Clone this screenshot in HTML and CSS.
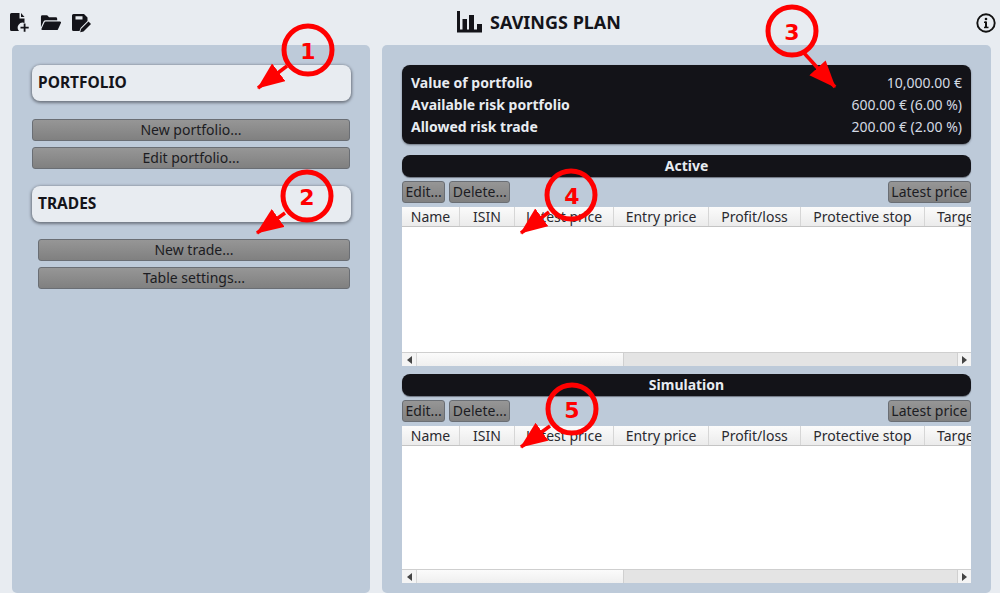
FILE: index.html
```html
<!DOCTYPE html>
<html lang="en">
<head>
  <meta charset="UTF-8" />
  <title>Savings plan</title>
  <link rel="stylesheet" href="styles.css">
</head>
<body>

<header class="topbar">
  <div class="file-icons">
    <svg class="icon" viewBox="0 0 20 20">
      <path d="M2 0h8v5.500h5V10a5 5 0 0 0-5.500 8H2a1.500 1.500 0 0 1-1.500-1.500V1.500A1.500 1.500 0 0 1 2 0z M11.500 0l3.500 4h-3.500z"/>
      <path d="M14.200 10.500h1.800v3.200h3.200v1.800H16v3.200h-1.800v-3.200H11v-1.800h3.200z"/>
    </svg>
    <svg class="icon" viewBox="0 0 22 20">
      <path d="M1 3.500a1.500 1.500 0 0 1 1.500-1.500h5l2 2h7a1.500 1.500 0 0 1 1.500 1.500V7H6a2.500 2.500 0 0 0-2.300 1.500L1 14.500z"/>
      <path d="M6 8.500h15a1 1 0 0 1 .9 1.400l-3 6.600a1.500 1.500 0 0 1-1.400 .9H2.500a1 1 0 0 1-.9-1.400l3-6.600A1.500 1.500 0 0 1 6 8.500z"/>
    </svg>
    <svg class="icon" viewBox="0 0 21 20">
      <path d="M2.500 1h10.500l3.500 3.500V8l-7 7-1 3H2.500a1.500 1.500 0 0 1-1.500-1.500V2.500A1.500 1.500 0 0 1 2.500 1z M4.500 3.300v3.200h7V3.300z" fill-rule="evenodd"/>
      <path d="M17.500 8.500l2.500 2.500-7.500 7.500-3.300 .8 .8-3.300z"/>
    </svg>
  </div>
  <h1 class="app-title">
    <svg class="chart-icon" viewBox="0 0 25 22">
      <path d="M0 0h3v18.500h22V21.500H0z"/>
      <path d="M5.500 8H10v11H5.500z M12 4h5v15h-5z M20 13h5v6h-5z"/>
    </svg>
    SAVINGS PLAN
  </h1>
  <svg class="info-icon" viewBox="0 0 20 20">
    <circle cx="10" cy="10" r="8.700" fill="none" stroke="#111" stroke-width="1.900"/>
    <rect x="9" y="8.500" width="2" height="6.500" fill="#111"/>
    <rect x="8" y="8.500" width="2" height="1.500" fill="#111"/>
    <rect x="8" y="13.700" width="4.500" height="1.500" fill="#111"/>
    <circle cx="10" cy="6" r="1.300" fill="#111"/>
  </svg>
</header>

<main class="content">
  <aside class="panel side">
    <div class="group-title">PORTFOLIO</div>
    <div class="btn-list">
      <button class="btn">New portfolio...</button>
      <button class="btn">Edit portfolio...</button>
    </div>
    <div class="group-title">TRADES</div>
    <div class="btn-list indented">
      <button class="btn">New trade...</button>
      <button class="btn">Table settings...</button>
    </div>
  </aside>

  <section class="panel plan">
    <div class="summary">
      <div class="summary-row"><b>Value of portfolio</b><span>10,000.00 €</span></div>
      <div class="summary-row"><b>Available risk portfolio</b><span>600.00 € (6.00 %)</span></div>
      <div class="summary-row"><b>Allowed risk trade</b><span>200.00 € (2.00 %)</span></div>
    </div>

    <div class="trade-block">
      <div class="bar-title">Active</div>
      <div class="table-tools">
        <button class="btn tool">Edit...</button>
        <button class="btn tool">Delete...</button>
        <button class="btn tool push">Latest price</button>
      </div>
      <div class="table">
        <div class="table-head">
          <span>Name</span><span>ISIN</span><span>Latest price</span><span>Entry price</span><span>Profit/loss</span><span>Protective stop</span><span class="clip">Target</span>
        </div>
        <div class="table-body"></div>
        <div class="hscroll">
          <span class="arrow"><i class="tri left"></i></span>
          <span class="thumb"></span>
          <span class="arrow end"><i class="tri right"></i></span>
        </div>
      </div>
    </div>

    <div class="trade-block second">
      <div class="bar-title">Simulation</div>
      <div class="table-tools">
        <button class="btn tool">Edit...</button>
        <button class="btn tool">Delete...</button>
        <button class="btn tool push">Latest price</button>
      </div>
      <div class="table">
        <div class="table-head">
          <span>Name</span><span>ISIN</span><span>Latest price</span><span>Entry price</span><span>Profit/loss</span><span>Protective stop</span><span class="clip">Target</span>
        </div>
        <div class="table-body"></div>
        <div class="hscroll">
          <span class="arrow"><i class="tri left"></i></span>
          <span class="thumb"></span>
          <span class="arrow end"><i class="tri right"></i></span>
        </div>
      </div>
    </div>
  </section>
</main>

<!-- numbered callouts drawn over the screenshot -->
<svg class="callouts" viewBox="0 0 1000 593">
  <defs>
    <marker id="head" markerUnits="userSpaceOnUse" markerWidth="28" markerHeight="24" refX="26" refY="11" orient="auto">
      <path d="M0 0L27 11L0 22z" fill="#f00"/>
    </marker>
  </defs>
  <g class="callout">
    <circle cx="308" cy="50" r="24"/><line x1="287" y1="66" x2="258" y2="88" marker-end="url(#head)"/>
    <text x="308" y="59">1</text>
  </g>
  <g class="callout">
    <circle cx="307" cy="196" r="24"/><line x1="285" y1="213" x2="257" y2="233" marker-end="url(#head)"/>
    <text x="307" y="205">2</text>
  </g>
  <g class="callout">
    <circle cx="792" cy="31" r="24"/><line x1="804" y1="53" x2="835" y2="87" marker-end="url(#head)"/>
    <text x="792" y="40">3</text>
  </g>
  <g class="callout">
    <circle cx="571" cy="195" r="24"/><line x1="549" y1="212" x2="521" y2="233" marker-end="url(#head)"/>
    <text x="572" y="204">4</text>
  </g>
  <g class="callout">
    <circle cx="572" cy="409" r="24"/><line x1="550" y1="426" x2="521" y2="447" marker-end="url(#head)"/>
    <text x="572" y="418">5</text>
  </g>
</svg>

</body>
</html>
```

FILE: styles.css
```css
html, body {
  margin: 0;
  height: 100%;
}
body {
  font-family: "Noto Sans", sans-serif;
  font-size: 14px;
  color: #1c1c22;
  background: #e8ecf1;
  display: flex;
  flex-direction: column;
  overflow: hidden;
}
.topbar {
  height: 45px;
  flex: none;
  display: flex;
  align-items: center;
  position: relative;
  padding: 0 13px 0 9px;
  box-sizing: border-box;
}
.file-icons {
  display: flex;
  gap: 10px;
}
.icon {
  height: 20px;
  width: 21px;
  fill: #14141a;
}
.app-title {
  margin: 0 auto;
  padding: 0 0 2px 10px;
  display: flex;
  align-items: center;
  gap: 8px;
  font-size: 18px;
  font-weight: 700;
  color: #14141a;
}
.chart-icon {
  width: 25px;
  height: 22px;
  fill: #14141a;
}
.info-icon {
  width: 20px;
  height: 20px;
  margin-right: -9px;
}
.content {
  flex: 1;
  display: flex;
  gap: 12px;
  padding: 0 9px 0 12px;
  min-height: 0;
}
.panel {
  background: #bdcad9;
  border-radius: 5px;
  padding: 20px;
  box-sizing: border-box;
}
.side {
  width: 358px;
  flex: none;
}
.plan {
  flex: 1;
  min-width: 0;
  display: flex;
  flex-direction: column;
}
.group-title {
  height: 36px;
  line-height: 35px;
  padding-left: 6px;
  margin-right: -1px;
  box-sizing: border-box;
  background: #e8ecf1;
  border-radius: 8px;
  box-shadow: 0 1px 3px 1px #6f7681;
  font-size: 15.500px;
  font-weight: 700;
  color: #14141a;
}
.btn-list {
  display: flex;
  flex-direction: column;
  gap: 6px;
  margin: 18px 0 17px;
}
.btn-list.indented {
  margin: 17px 0 0 6px;
}
.btn {
  height: 22px;
  padding: 0;
  font-family: inherit;
  font-size: 14px;
  line-height: 20px;
  color: #1c1c22;
  background: linear-gradient(#969696, #808080);
  border: 1px solid #6a6e74;
  border-radius: 3px;
}
.summary {
  height: 79px;
  flex: none;
  padding: 7px 9px;
  box-sizing: border-box;
  background: #131318;
  border-radius: 8px;
  box-shadow: 0 1px 2px #6f7681;
  color: #d3dae3;
}
.summary-row {
  height: 22px;
  line-height: 22px;
  display: flex;
  justify-content: space-between;
}
.summary-row b {
  color: #e8ecf1;
}
.trade-block {
  margin-top: 11px;
}
.trade-block.second {
  margin-top: 8px;
}
.bar-title {
  height: 22px;
  line-height: 22px;
  text-align: center;
  background: #131318;
  border-radius: 8px;
  box-shadow: 0 1px 1px #6f7681;
  color: #e8ecf1;
  font-weight: 700;
}
.table-tools {
  display: flex;
  gap: 4px;
  margin: 4px 0;
}
.tool {
  padding: 0 2.500px;
}
.push {
  margin-left: auto;
}
.table {
  background: #fff;
  overflow: hidden;
}
.table-head {
  height: 19px;
  display: grid;
  grid-template-columns: 58px 55px 99px 95px 92px 124px 46px;
  border-bottom: 1px solid #c4c4c4;
  background: linear-gradient(#fbfbfb, #ebebeb);
}
.table-head span {
  line-height: 20px;
  text-align: center;
  border-right: 1px solid #d6d6d6;
  white-space: nowrap;
  overflow: hidden;
  color: #2a2a30;
}
.table-head .clip {
  border-right: 0;
  text-align: left;
  padding-left: 12px;
}
.table-body {
  height: 125px;
  background: #fff;
}
.second .table-body {
  height: 123px;
}
.hscroll {
  height: 13px;
  display: flex;
  background: #e4e4e4;
  border-top: 1px solid #cfcfcf;
}
.arrow {
  width: 14px;
  flex: none;
  display: flex;
  align-items: center;
  justify-content: center;
  background: #f4f4f4;
}
.arrow.end {
  margin-left: auto;
  border-left: 1px solid #d0d0d0;
  box-sizing: border-box;
}
.thumb {
  width: 208px;
  background: linear-gradient(#fbfbfb, #efefef);
  border-left: 1px solid #d8d8d8;
  border-right: 1px solid #d0d0d0;
  box-sizing: border-box;
}
.tri {
  width: 0;
  height: 0;
  border-top: 4px solid transparent;
  border-bottom: 4px solid transparent;
}
.tri.left {
  border-right: 5px solid #444;
}
.tri.right {
  border-left: 5px solid #444;
}
.callouts {
  position: absolute;
  left: 0;
  top: 0;
  width: 1000px;
  height: 593px;
  pointer-events: none;
}
.callout circle {
  fill: none;
  stroke: #f00;
  stroke-width: 5;
}
.callout line {
  stroke: #f00;
  stroke-width: 3.500;
}
.callout text {
  fill: #f00;
  font-family: "DejaVu Sans", sans-serif;
  font-size: 22px;
  font-weight: 700;
  text-anchor: middle;
}
```
